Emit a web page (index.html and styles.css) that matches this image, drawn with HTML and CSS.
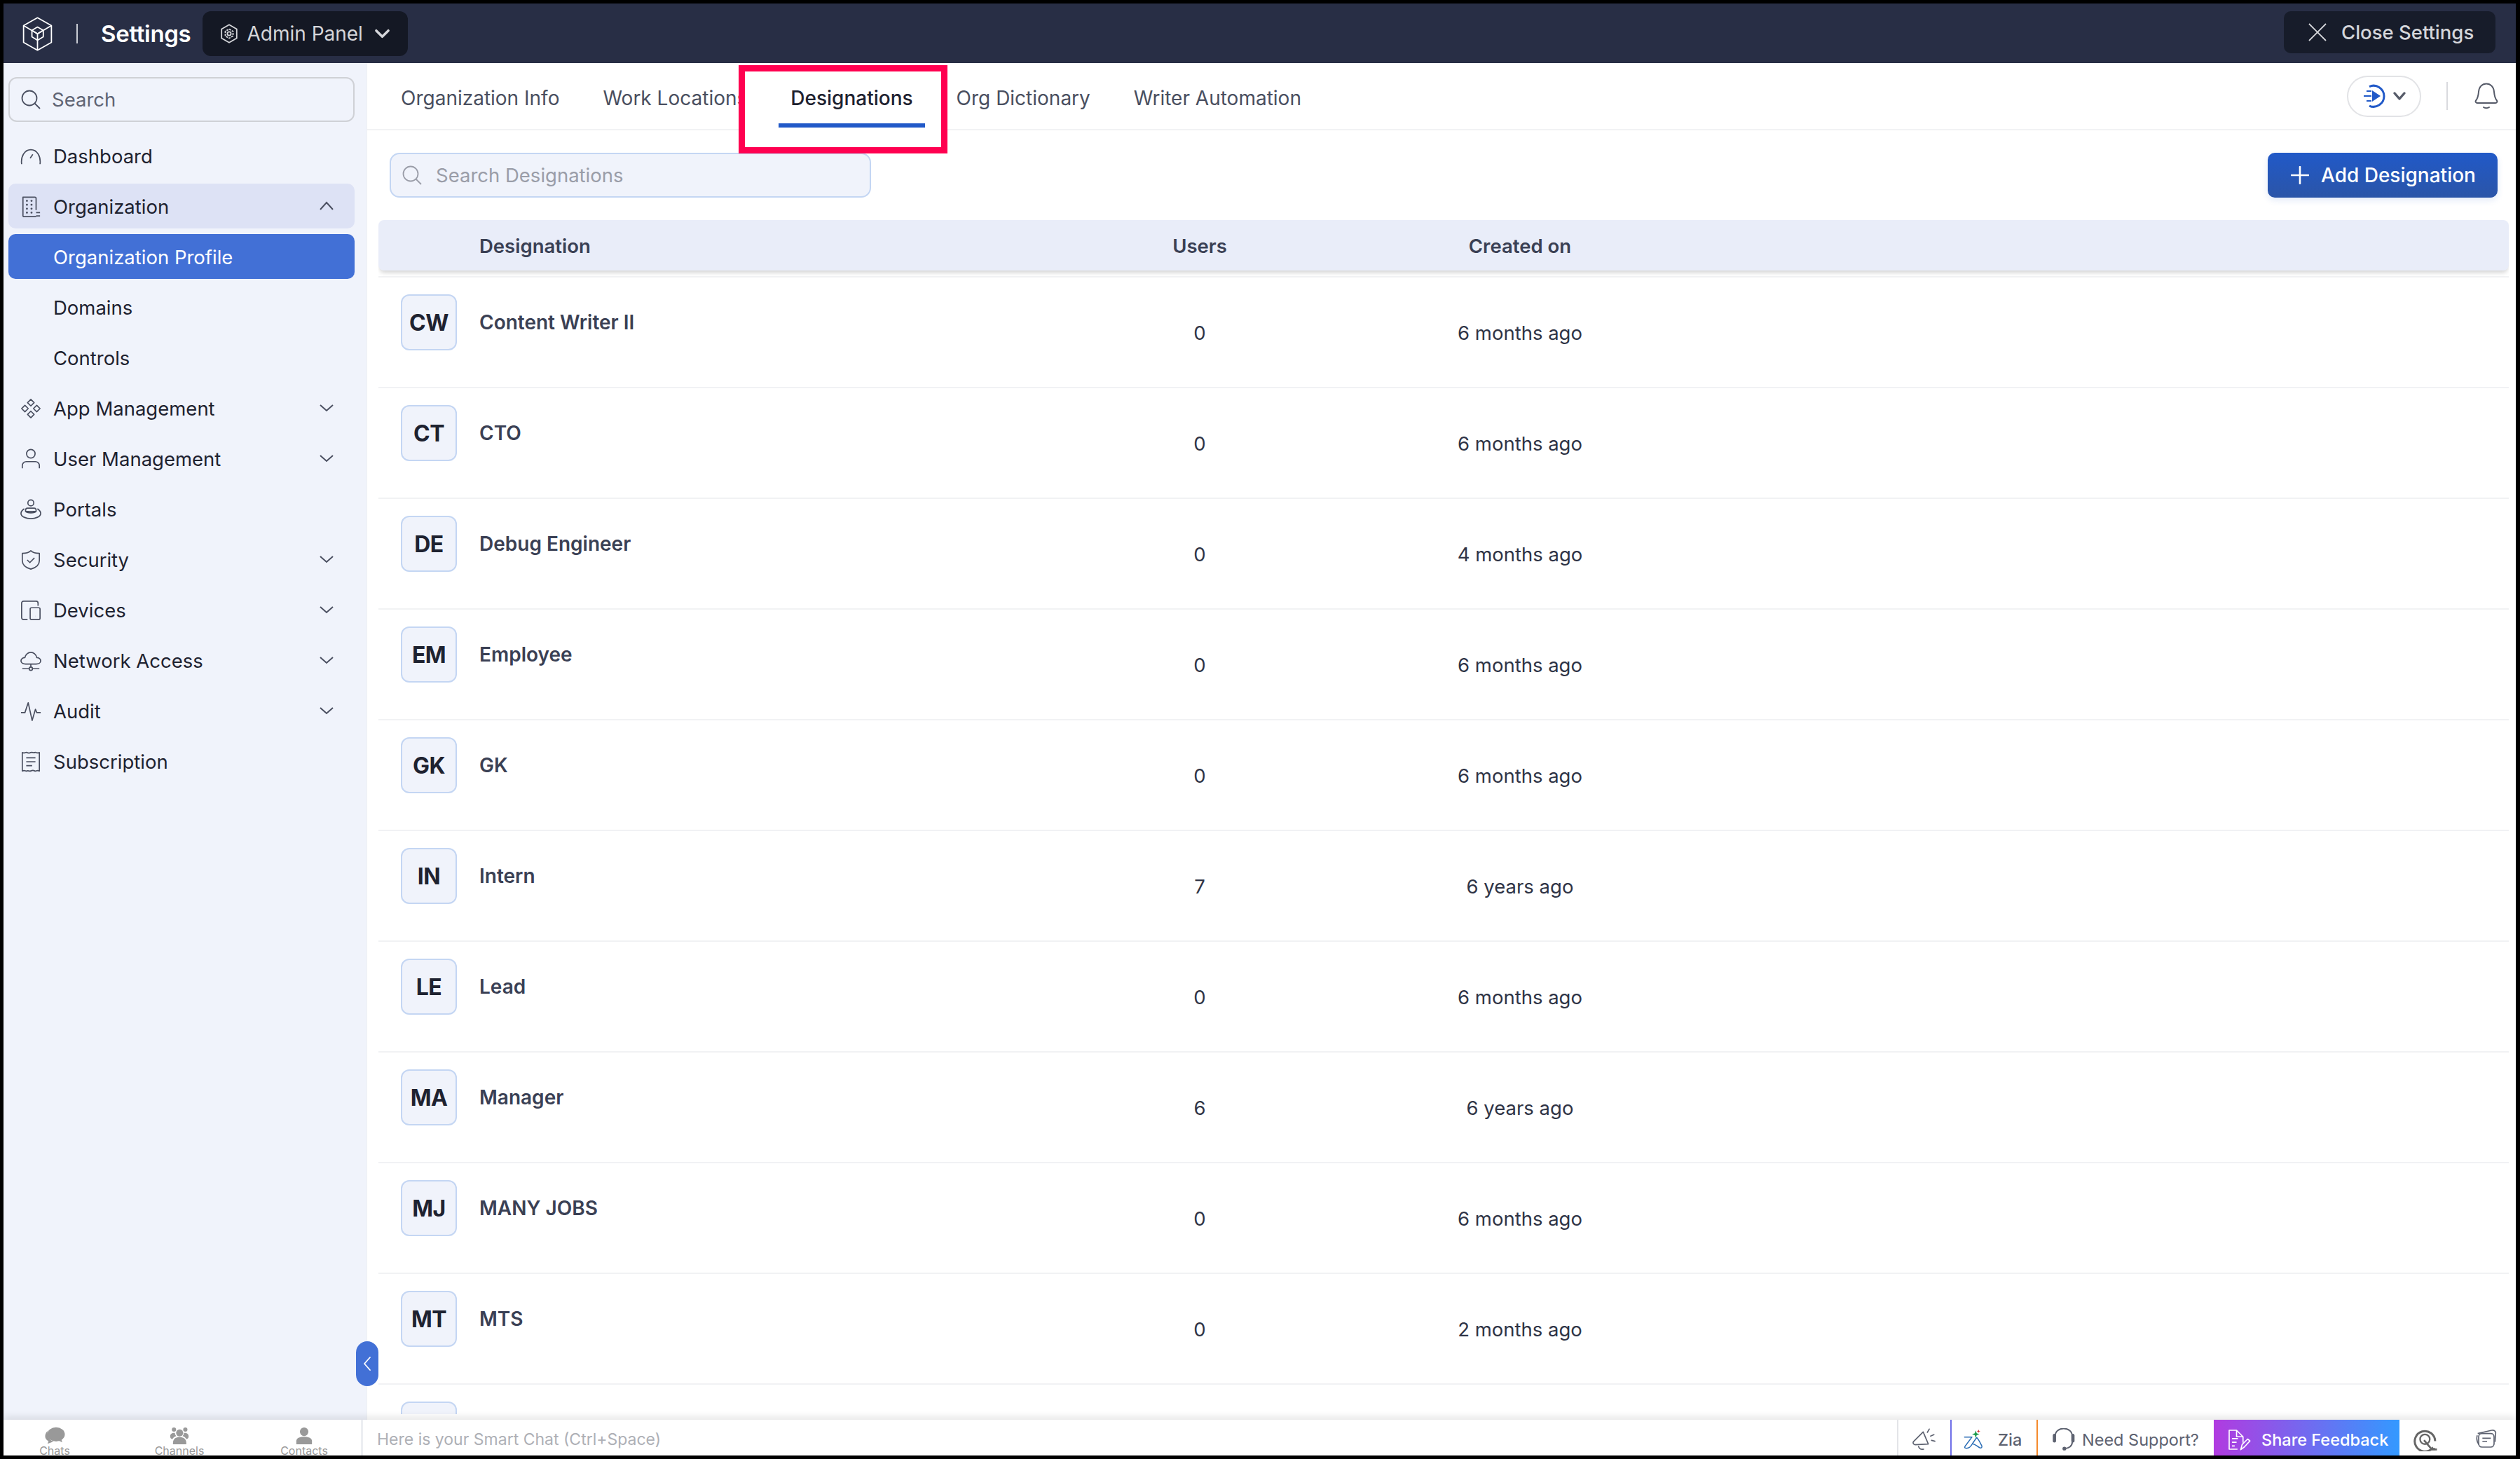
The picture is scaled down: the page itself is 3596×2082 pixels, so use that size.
FILE: index.html
```html
<!DOCTYPE html>
<html lang="en">
<head>
<meta charset="utf-8">
<title>Settings - Designations</title>
<link rel="stylesheet" href="styles.css">
</head>
<body>
<div class="app">
  <header class="topbar">
    <svg class="logo" viewBox="38 40 128 148" fill="none" stroke="#fff" stroke-width="5.400" stroke-linejoin="round"><path d="M102 44l60 34v72l-60 34-60-34V78Z"/><path d="M42 78l60 35 60-35M102 113v71"/><path d="M102 84l25 14v28l-25 15-24-15V98Z"/><path d="M78 98l24 15 25-15"/></svg>
    <span class="bar-sep"></span>
    <span class="app-title">Settings</span>
    <button class="panel-btn">
      <svg class="panel-ico" viewBox="0 0 24 28" fill="none" stroke="#d5d6da" stroke-width="1.800"><path d="M12 1.200 22.800 7.500v13L12 26.800 1.200 20.500v-13Z"/><circle cx="12" cy="14" r="2.600"/><path d="M12 7.500l5.500 3.200v6.600L12 20.500l-5.500-3.200v-6.600Z" stroke-dasharray="3 1.300"/></svg>
      <span>Admin Panel</span>
      <svg class="panel-chev" viewBox="0 0 24 14" fill="none" stroke="#d5d6da" stroke-width="3.600" stroke-linecap="round" stroke-linejoin="round"><path d="M3 2.500l9 9 9-9"/></svg>
    </button>
    <button class="close-btn">
      <svg class="close-ico" viewBox="0 0 26 26" fill="none" stroke="#d5d6da" stroke-width="1.800"><path d="M1 1l24 24M25 1 1 25"/></svg>
      <span>Close Settings</span>
    </button>
  </header>

  <div class="middle">
    <aside class="sidebar">
      <div class="side-search">
        <svg class="ico-search" viewBox="0 0 28 28" fill="none" stroke="#4a4f60" stroke-width="1.800"><circle cx="12" cy="12" r="10.500"/><path d="M19.500 19.500l7.500 7.500"/></svg>
        <span>Search</span>
      </div>
      <nav class="side-nav">
        <a class="nav-item"><svg class="nav-ico" viewBox="0 0 32 32"><path d="M2 28C.5 16 6.500 6 16 6s15.500 10 14 22M19 13l-4 6"/></svg><span>Dashboard</span></a>
        <a class="nav-item is-open"><svg class="nav-ico" viewBox="0 0 32 32"><path d="M4 31V1.500h18a2 2 0 0 1 2 2V21M4 31h20M24 25h6M24 30h6"/><path class="dots" d="M10 7h.1M17 7h.1M10 13h.1M17 13h.1M10 19h.1M17 19h.1M10 25h.1M17 25h.1"/></svg><span>Organization</span><svg class="nav-chev" viewBox="0 0 22 14"><path d="M2 12l9-10 9 10"/></svg></a>
        <a class="nav-item is-active"><span class="sub-label">Organization Profile</span></a>
        <a class="nav-item"><span class="sub-label">Domains</span></a>
        <a class="nav-item"><span class="sub-label">Controls</span></a>
        <a class="nav-item"><svg class="nav-ico" viewBox="0 0 32 32"><path d="M16 2l5 5-5 5-5-5ZM16 20l5 5-5 5-5-5ZM7 11l5 5-5 5-5-5ZM25 11l5 5-5 5-5-5Z"/></svg><span>App Management</span><svg class="nav-chev" viewBox="0 0 22 14"><path d="M2 3l9 8 9-8"/></svg></a>
        <a class="nav-item"><svg class="nav-ico" viewBox="0 0 32 32"><circle cx="16" cy="8" r="6.500"/><path d="M3 30v-4a6 6 0 0 1 6-6h14a6 6 0 0 1 6 6v4"/></svg><span>User Management</span><svg class="nav-chev" viewBox="0 0 22 14"><path d="M2 3l9 8 9-8"/></svg></a>
        <a class="nav-item"><svg class="nav-ico" viewBox="0 0 32 32"><circle cx="16" cy="6" r="4.500"/><path d="M8 19v-2a3 3 0 0 1 3-3h10a3 3 0 0 1 3 3v2ZM6 15C3 17 1 19 1 22c0 5 8 8 15 8s15-3 15-8c0-3-2-5-5-7M8 19c2 3 14 3 16 0"/></svg><span>Portals</span></a>
        <a class="nav-item"><svg class="nav-ico" viewBox="0 0 32 32"><path d="M16 2c3 3 8 4 13 4v11c0 7-6 11-13 13C9 28 3 24 3 17V6c5 0 10-1 13-4Z"/><path d="M10.500 16l4 4 7-7"/></svg><span>Security</span><svg class="nav-chev" viewBox="0 0 22 14"><path d="M2 3l9 8 9-8"/></svg></a>
        <a class="nav-item"><svg class="nav-ico" viewBox="0 0 32 32"><path d="M11 30H5a3 3 0 0 1-3-3V5a3 3 0 0 1 3-3h19a3 3 0 0 1 3 3v4"/><rect x="15" y="12" width="15" height="18" rx="2"/><path d="M22.500 25h.1"/></svg><span>Devices</span><svg class="nav-chev" viewBox="0 0 22 14"><path d="M2 3l9 8 9-8"/></svg></a>
        <a class="nav-item"><svg class="nav-ico" viewBox="0 0 32 32"><path d="M8 21c-4 0-7-2-7-5s3-5 6-5c1-5 5-8 9-8s8 3 9 8c3 0 6 2 6 5s-3 5-7 5ZM16 21v5M3 28h10M19 28h10"/><circle cx="16" cy="28" r="2.500"/></svg><span>Network Access</span><svg class="nav-chev" viewBox="0 0 22 14"><path d="M2 3l9 8 9-8"/></svg></a>
        <a class="nav-item"><svg class="nav-ico" viewBox="0 0 32 32"><path d="M1 18h6l5-15 6 27 5-17 2 5h6"/></svg><span>Audit</span><svg class="nav-chev" viewBox="0 0 22 14"><path d="M2 3l9 8 9-8"/></svg></a>
        <a class="nav-item"><svg class="nav-ico" viewBox="0 0 32 32"><path d="M3 2c4 2 5-1 7 0s4 1 6 0 4 1 6 0 3 2 7 0v28c-4-2-5 1-7 0s-4-1-6 0-4-1-6 0-3-2-7 0ZM9 10h14M9 16h14M9 22h9"/></svg><span>Subscription</span></a>
      </nav>
    </aside>

    <main class="content">
      <div class="tabs">
        <a class="tab">Organization Info</a>
        <a class="tab">Work Locations</a>
        <a class="tab tab-active">Designations</a>
        <a class="tab">Org Dictionary</a>
        <a class="tab">Writer Automation</a>
        <div class="tab-tools">
          <div class="play-pill">
            <svg class="play-ico" viewBox="0 0 32 34" fill="none" stroke="#2159c8" stroke-width="3"><path d="M9 3.500A15 15 0 1 1 9 31"/><path d="M13 9l12 8-12 8Z" fill="#2159c8" stroke="none"/><path d="M5 10h7M1 17h11M5 24h7" stroke-width="2.200"/></svg>
            <svg class="pill-chev" viewBox="0 0 20 14" fill="none" stroke="#555a68" stroke-width="3.400" stroke-linecap="round" stroke-linejoin="round"><path d="M3 3l7 8 7-8"/></svg>
          </div>
          <span class="tool-sep"></span>
          <svg class="bell" viewBox="0 0 34 38" fill="none" stroke="#555a68" stroke-width="2"><path d="M4 29h26c2 0 3-2 2-3.500C29 22 28.500 19 28 13 27.500 6 23 1.500 17 1.500S6.500 6 6 13C5.500 19 5 22 2 25.500 1 27 2 29 4 29Z"/><path d="M13 35c2 1.500 6 1.500 8 0" stroke-linecap="round"/></svg>
        </div>
        <div class="tab-callout"></div>
      </div>

      <div class="toolbar">
        <div class="des-search">
          <svg class="ico-search" viewBox="0 0 28 28" fill="none" stroke="#9a9da8" stroke-width="1.800"><circle cx="12" cy="12" r="10.500"/><path d="M19.500 19.500l7.500 7.500"/></svg>
          <span>Search Designations</span>
        </div>
        <button class="add-btn">
          <svg class="plus" viewBox="0 0 26 26" fill="none" stroke="#fff" stroke-width="2.600" stroke-linecap="round"><path d="M13 1v24M1 13h24"/></svg>
          <span>Add Designation</span>
        </button>
      </div>

      <div class="table">
        <div class="thead">
          <span class="col-name">Designation</span>
          <span class="col-users">Users</span>
          <span class="col-date">Created on</span>
        </div>
        <div class="tbody">
          <div class="row"><span class="avatar">CW</span><span class="col-name name">Content Writer II</span><span class="col-users">0</span><span class="col-date">6 months ago</span></div>
          <div class="row"><span class="avatar">CT</span><span class="col-name name">CTO</span><span class="col-users">0</span><span class="col-date">6 months ago</span></div>
          <div class="row"><span class="avatar">DE</span><span class="col-name name">Debug Engineer</span><span class="col-users">0</span><span class="col-date">4 months ago</span></div>
          <div class="row"><span class="avatar">EM</span><span class="col-name name">Employee</span><span class="col-users">0</span><span class="col-date">6 months ago</span></div>
          <div class="row"><span class="avatar">GK</span><span class="col-name name">GK</span><span class="col-users">0</span><span class="col-date">6 months ago</span></div>
          <div class="row"><span class="avatar">IN</span><span class="col-name name">Intern</span><span class="col-users">7</span><span class="col-date">6 years ago</span></div>
          <div class="row"><span class="avatar">LE</span><span class="col-name name">Lead</span><span class="col-users">0</span><span class="col-date">6 months ago</span></div>
          <div class="row"><span class="avatar">MA</span><span class="col-name name">Manager</span><span class="col-users">6</span><span class="col-date">6 years ago</span></div>
          <div class="row"><span class="avatar">MJ</span><span class="col-name name">MANY JOBS</span><span class="col-users">0</span><span class="col-date">6 months ago</span></div>
          <div class="row"><span class="avatar">MT</span><span class="col-name name">MTS</span><span class="col-users">0</span><span class="col-date">2 months ago</span></div>
          <div class="row"><span class="avatar"></span></div>
        </div>
      </div>
    </main>
    <button class="collapse" aria-label="Collapse"><svg viewBox="0 0 12 22" fill="none" stroke="#fff" stroke-width="1.800" stroke-linecap="round" stroke-linejoin="round"><path d="M10 2 2 11l8 9"/></svg></button>
  </div>

  <footer class="bottombar">
    <div class="chat-tabs">
      <a class="chat-tab"><svg class="chat-ico" viewBox="10 20 88 74" fill="#999"><ellipse cx="60" cy="52" rx="37" ry="30"/><path d="M66 76l20 10-6-20ZM24 38C8 54 12 74 28 80l-4 12 26-10C34 80 22 62 24 38Z"/></svg><span>Chats</span></a>
      <a class="chat-tab"><svg class="chat-ico" viewBox="548 20 82 74" fill="#999"><circle cx="590" cy="46" r="15"/><circle cx="566" cy="32" r="9"/><circle cx="614" cy="32" r="9"/><path d="M562 94c-2-24 13-30 28-30s30 6 28 30Z"/><path d="M550 60c0-10 8-15 20-14 0 6 2 10 6 13-8 3-14 7-16 13-6 0-10-4-10-12ZM628 60c0-10-8-15-20-14 0 6-2 10-6 13 8 3 14 7 16 13 6 0 10-4 10-12Z"/></svg><span>Channels</span></a>
      <a class="chat-tab"><svg class="chat-ico" viewBox="1090 20 70 74" fill="#999"><circle cx="1125" cy="41" r="18"/><path d="M1092 94V80c0-14 18-18 33-18s33 4 33 18v14Z"/></svg><span>Contacts</span></a>
    </div>
    <div class="smart-chat">Here is your Smart Chat (Ctrl+Space)</div>
    <a class="foot-item foot-mega">
      <svg class="mega" viewBox="50 40 100 96" fill="none" stroke="#5d6270" stroke-width="5" stroke-linecap="round" stroke-linejoin="round"><path d="M56 98c-3 6 0 12 8 13l56-3L98 56Z"/><path d="M78 118c3 10 12 14 22 12M124 44l-8 14M144 68l-14 6M148 96l-14-4"/></svg>
    </a>
    <a class="foot-item foot-zia">
      <svg class="zia" viewBox="280 42 90 84" fill="none"><path d="M284 74h32l-30 40c-3 6 0 8 6 8 12 0 20-8 26-20l18-26c8 8 16 24 22 36 2 6-2 10-8 8-10-4-18-14-28-16" stroke="#2a6db5" stroke-width="4.500" stroke-linejoin="round" stroke-linecap="round"/><path d="M332 46l4 12 12 4-12 4-4 12-4-12-12-4 12-4Z" fill="#1e9a4c"/><path d="M344 42l2 5 6 2-6 2-2 5-2-5-6-2 6-2Z" fill="#d62b35"/></svg>
      <span>Zia</span>
    </a>
    <a class="foot-item foot-support">
      <svg class="head" viewBox="650 38 100 96" fill="none" stroke="#5d6270" stroke-width="6"><path d="M664 72c0-44 74-44 74 0M738 98c0 16-14 27-34 28"/><rect x="654" y="62" width="14" height="38" rx="7" fill="#5d6270" stroke="none"/><rect x="734" y="62" width="14" height="38" rx="7" fill="#5d6270" stroke="none"/><circle cx="704" cy="126" r="8" fill="#5d6270" stroke="none"/></svg>
      <span>Need Support?</span>
    </a>
    <a class="foot-share">
      <svg class="share" viewBox="24 40 100 94" fill="none" stroke="#fff" stroke-width="5" stroke-linejoin="round"><path d="M66 128H30V46h32l28 28v26M62 46v28h28"/><path d="M42 82h26M42 98h20M42 114h12"/><path d="M80 130l6-22 24-24 10 8-24 26Z"/></svg>
      <span>Share Feedback</span>
    </a>
    <a class="foot-ico foot-q"><svg class="q" viewBox="820 28 108 106" fill="none" stroke="#666"><path d="M916 124h-10l-2-3a44 44 0 1 1 12-31" stroke-width="9"/><path d="M868 86l34 40h22" stroke-width="8"/><circle cx="872" cy="82" r="21" stroke-width="7"/></svg></a>
    <a class="foot-ico foot-note"><svg class="note" viewBox="1084 38 90 84" fill="none" stroke="#5d6270" stroke-width="5"><path d="M1092 58l60-14c8-2 16 2 17 10l-3 40"/><rect x="1096" y="58" width="66" height="58" rx="14"/><path d="M1090 66c-4 14-2 28 8 40M1112 78h36M1112 92h20"/></svg></a>
  </footer>
</div>
</body>
</html>
```

FILE: styles.css
```css
* { box-sizing: border-box; }
html, body { margin: 0; height: 100%; }
body {
  background: #000;
  font-family: Inter, "Noto Sans", sans-serif;
  padding: 5px 6px 5px 5px;
  height: 2082px;
  overflow: hidden;
  color: #1e2230;
}
button { font-family: inherit; border: 0; }
.app { display: flex; flex-direction: column; height: 100%; background: #fff; }

/* top bar */
.topbar { height: 85px; flex: none; background: #282e45; display: flex; align-items: center; padding: 0 29px 0 27px; color: #fff; }
.logo { width: 43px; height: 49px; margin-top: 1px; flex: none; }
.bar-sep { width: 2px; height: 28px; background: #c9ccd4; margin: 1px 33px 0 34px; flex: none; }
.app-title { font-size: 33px; font-weight: 600; letter-spacing: -.3px; }
.panel-btn { margin: 1px 0 0 17px; width: 293px; height: 64px; background: #141824; border-radius: 12px; color: #d5d6da; display: flex; align-items: center; padding: 0 0 0 26px; font-size: 28px; white-space: nowrap; }
.panel-ico { width: 24px; height: 28px; margin-right: 13px; flex: none; }
.panel-chev { width: 23px; height: 14px; margin-left: 16px; flex: none; }
.close-btn { margin: -3px 0 0 auto; width: 302px; height: 60px; background: #171c2a; border-radius: 10px; color: #d5d6da; display: flex; align-items: center; padding: 0 0 0 35px; gap: 21px; font-size: 27.5px; font-weight: 500; white-space: nowrap; }
.close-ico { width: 26px; height: 26px; flex: none; }

/* middle */
.middle { flex: 1; min-height: 0; display: flex; position: relative; }
.collapse { position: absolute; left: 503px; top: 1824px; width: 32px; height: 64px; border-radius: 16px; background: #4270d6; padding: 0; display: flex; align-items: center; justify-content: center; z-index: 3; }
.collapse svg { width: 12px; height: 22px; }

/* sidebar */
.sidebar { width: 519px; flex: none; background: #f0f3fb; padding: 20px 18px 0 7px; border-right: 1px solid #eef0f5; }
.side-search { height: 64px; border: 2px solid #cfd1d6; border-radius: 12px; display: flex; align-items: center; padding: 0 16px; gap: 16px; font-size: 27.5px; color: #5f6474; width: 494px; }
.ico-search { width: 28px; height: 28px; flex: none; }
.side-nav { margin-top: 16px; display: flex; flex-direction: column; gap: 8px; }
.nav-item { height: 64px; width: 494px; border-radius: 10px; display: flex; align-items: center; padding: 1px 0 0 17px; font-size: 27.5px; color: #1e2230; position: relative; }
.nav-item.is-open { background: #dde2f5; }
.nav-item.is-active { background: #4270d6; color: #fff; }
.nav-ico { width: 30px; height: 30px; flex: none; margin-right: 17px; fill: none; stroke: #4a4f60; stroke-width: 1.800; stroke-linejoin: round; }
.nav-ico .dots { stroke-width: 3; stroke-linecap: round; }
.sub-label { margin-left: 47px; }
.nav-chev { position: absolute; right: 29px; top: 25px; width: 22px; height: 14px; fill: none; stroke: #4a4f60; stroke-width: 2; }

/* tabs */
.content { flex: 1; min-width: 0; display: flex; flex-direction: column; padding-bottom: 8px; overflow: hidden; }
.tabs { height: 96px; flex: none; position: relative; display: flex; align-items: stretch; padding: 0 0 0 48px; gap: 62px; border-bottom: 2px solid #f1f2f4; }
.tab { font-size: 28px; color: #4a4f60; display: flex; align-items: center; padding-top: 5px; white-space: nowrap; }
.tab-active { color: #1e2230; font-weight: 500; position: relative; z-index: 2; }
.tab-active::after { content: ""; position: absolute; left: -17px; right: -17px; top: 86px; height: 6px; background: #2159c8; }
.tab-callout { position: absolute; left: 530px; top: 3px; width: 298px; height: 126px; border: 9px solid #ff0050; background: #fff; z-index: 1; }
.tab-tools { margin-left: auto; display: flex; align-items: center; padding-right: 25px; }
.play-pill { width: 106px; height: 59px; border: 2px solid #e2e3e6; border-radius: 30px; display: flex; align-items: center; padding-left: 21px; gap: 10px; }
.play-ico { width: 32px; height: 34px; }
.pill-chev { width: 20px; height: 14px; }
.tool-sep { width: 2px; height: 40px; background: #d9dade; margin: 0 38px 0 36px; }
.bell { width: 34px; height: 38px; }

/* toolbar */
.toolbar { flex: none; height: 128px; display: flex; align-items: flex-start; justify-content: space-between; padding: 32px 26px 0 32px; }
.des-search { width: 687px; height: 64px; background: #f0f3fb; border: 2px solid #c4d6f3; border-radius: 14px; display: flex; align-items: center; padding: 0 16px; gap: 20px; font-size: 27.5px; color: #9a9da8; }
.add-btn { width: 328px; height: 64px; border-radius: 10px; background: linear-gradient(#2159c8, #2b55a8); color: #fff; display: flex; align-items: center; padding: 0 0 0 33px; gap: 17px; font-size: 28px; font-weight: 500; box-shadow: 0 4px 10px rgba(33,89,200,.12); white-space: nowrap; }
.plus { width: 26px; height: 26px; }

/* table */
.table { flex: 1; min-height: 0; margin: 0 10px 0 16px; display: flex; flex-direction: column; overflow: hidden; }
.thead { flex: none; height: 72px; background: #e9edf9; border-radius: 8px; position: relative; font-size: 27.5px; font-weight: 600; color: #3a4054; display: flex; align-items: center; padding-top: 1px; box-shadow: 0 5px 6px -2px rgba(0,0,0,.18); z-index: 1; margin-bottom: 10px; }
.col-name { position: absolute; left: 144px; }
.col-users { position: absolute; left: 1122px; width: 100px; text-align: center; }
.col-date { position: absolute; left: 1479px; width: 300px; text-align: center; }
.tbody { flex: 1; min-height: 0; overflow: hidden; border-top: 2px solid #f1f2f4; margin-top: -2px; }
.row { height: 158px; position: relative; border-bottom: 2px solid #f1f2f4; font-size: 27.5px; color: #2f3446; display: flex; align-items: center; padding-top: 1px; }
.avatar { position: absolute; left: 32px; top: 24px; width: 80px; height: 80px; border: 2px solid #c4d6f3; border-radius: 12px; background: #f0f3fb; display: flex; align-items: center; justify-content: center; font-size: 32px; font-weight: 700; letter-spacing: -.5px; color: #1e2230; }
.name { top: 47px; font-weight: 600; font-size: 28px; color: #3a4054; }

/* bottom bar */
.bottombar { flex: none; height: 51px; background: #fff; display: flex; align-items: stretch; position: relative; box-shadow: 0 -4px 10px rgba(0,0,0,.1); z-index: 4; }
.chat-tabs { width: 513px; flex: none; display: flex; border-right: 3px solid #eceef2; overflow: hidden; }
.chat-tab { width: 178px; flex: none; display: flex; flex-direction: column; align-items: center; padding-top: 10px; font-size: 16px; color: #999; line-height: 14px; white-space: nowrap; }
.chat-tab:first-child { margin-left: -16px; }
.chat-ico { width: 30px; height: 25px; flex: none; margin-bottom: 2px; }
.smart-chat { flex: 1; padding: 5px 0 0 20px; font-size: 23px; line-height: 46px; color: #aeb0b6; white-space: nowrap; }
.foot-item { display: flex; align-items: center; padding-top: 5px; font-size: 23.5px; color: #5d6270; white-space: nowrap; }
.foot-mega { width: 76px; border-left: 2px solid #e3e4e8; padding-left: 19px; }
.mega { width: 34px; height: 32px; }
.foot-zia { width: 123px; border-left: 2px solid #6f6fe8; padding-left: 17px; gap: 19px; font-weight: 500; }
.zia { width: 30px; height: 28px; flex: none; }
.foot-support { width: 253px; border-left: 2px solid #f58a2c; padding-left: 20px; gap: 10px; }
.head { width: 33px; height: 32px; flex: none; }
.foot-share { width: 265px; flex: none; background: linear-gradient(90deg, #b13be0, #3399ff); color: #fff; font-size: 23.5px; font-weight: 500; display: flex; align-items: center; padding: 5px 0 0 20px; gap: 15px; white-space: nowrap; }
.share { width: 33px; height: 31px; flex: none; }
.foot-ico { display: flex; align-items: center; justify-content: center; padding-top: 3px; }
.foot-q { width: 74px; }
.foot-note { width: 92px; padding-left: 8px; }
.q { width: 36px; height: 35px; }
.note { width: 30px; height: 28px; }
```
